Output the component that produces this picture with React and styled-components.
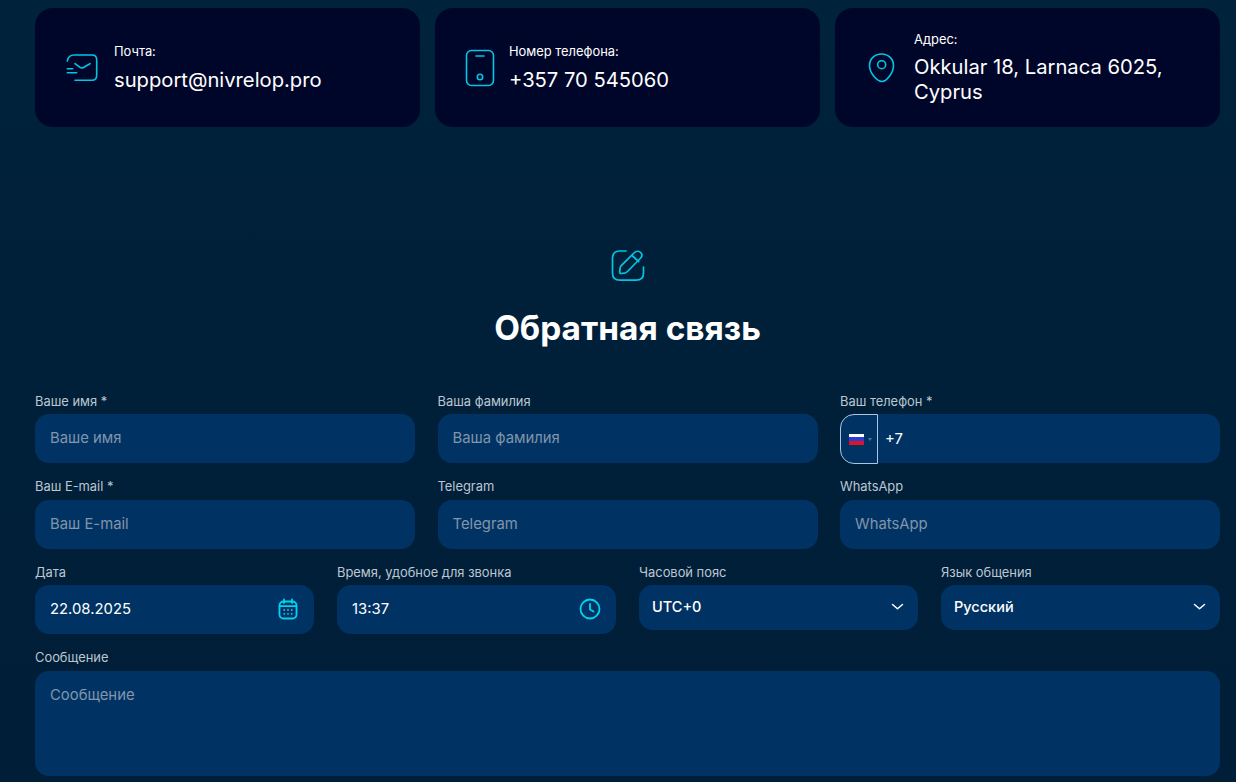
import React from "react";
import styled, { createGlobalStyle } from "styled-components";

const Global = createGlobalStyle`
  html, body { margin: 0; padding: 0; height: 100%; overflow: hidden; }
  body { background: #001f38; font-family: Inter, "Noto Sans", sans-serif; }
  * { box-sizing: border-box; }
`;

const Page = styled.div`
  width: 1236px;
  height: 782px;
  overflow: hidden;
  padding: 8px 16px 0 35px;
  background: linear-gradient(180deg, #00223b 0%, #001f39 50%, #001e38 100%);
`;

const Cards = styled.div`
  display: grid;
  grid-template-columns: repeat(3, 385px);
  gap: 15px;
`;

const Card = styled.div`
  height: 119px;
  border-radius: 18px;
  background: #00062a;
  display: flex;
  align-items: center;
  padding-left: ${p => p.$pad}px;
  gap: ${p => p.$gap}px;
`;

const CardIcon = styled.svg`
  flex: none;
  fill: none;
  stroke: #00c6e6;
  stroke-width: 1.6;
  stroke-linecap: round;
  stroke-linejoin: round;
  margin-top: 1px;
`;

const CardText = styled.div`
  display: flex;
  flex-direction: column;
  color: #fff;
  margin-top: 1px;
`;

const CardLabel = styled.div`
  font-size: 12.9px;
  line-height: 16px;
  margin-bottom: ${p => p.$gap ?? 7.5}px;
`;

const CardValue = styled.div`
  font-size: 20.2px;
  line-height: 25px;
  width: 270px;
`;

const Heading = styled.section`
  display: flex;
  flex-direction: column;
  align-items: center;
  margin-top: 121px;
  height: 145px;
`;

const HeadIcon = styled.svg`
  fill: none;
  stroke: #00c6e6;
  stroke-width: 1.7;
  stroke-linecap: round;
  stroke-linejoin: round;
`;

const Title = styled.h2`
  margin: 24px 0 0;
  color: #fff;
  font-size: 33.4px;
  line-height: 44px;
  font-weight: 700;
`;

const Row = styled.div`
  display: grid;
  grid-template-columns: ${p => p.$cols === 4 ? "repeat(4, 279px)" : "repeat(3, 380px)"};
  column-gap: ${p => p.$cols === 4 ? "23px" : "22.5px"};
  margin-bottom: 15.5px;
  align-items: start;
`;

const Field = styled.div`
  display: flex;
  flex-direction: column;
`;

const Label = styled.label`
  font-size: 12.9px;
  line-height: 16px;
  height: 21px;
  padding-top: 0.8px;
  color: #bcc6d0;
`;

const Control = styled.div`
  height: ${p => p.$h || 49}px;
  border-radius: 14px;
  background: #003363;
  display: flex;
  align-items: center;
  justify-content: space-between;
  padding: 0 ${p => p.$pr ?? 15}px 1px ${p => p.$pl ?? 15}px;
  font-size: 14.85px;
  color: #fff;
  position: relative;
`;

const Placeholder = styled.span`
  color: #8195ab;
`;

const FlagBox = styled.div`
  position: absolute;
  left: 0;
  top: 0;
  width: 38px;
  height: 50px;
  border: 1px solid #a9c6e0;
  border-radius: 14px 0 0 14px;
  display: flex;
  align-items: center;
  padding-left: 8px;
  gap: 4px;
`;

const Flag = styled.div`
  width: 15px;
  height: 11px;
  background: linear-gradient(180deg, #fff 0 30%, #2a3ce0 30% 66%, #e0141e 66% 100%);
`;

const Caret = styled.div`
  width: 0;
  height: 0;
  border-left: 2px solid transparent;
  border-right: 2px solid transparent;
  border-top: 3px solid #5f6f80;
`;

const PhoneValue = styled.span`
  margin: 2px 0 0 30px;
`;

const SelectValue = styled.span`
  font-weight: 500;
  font-size: 14.5px;
  margin-top: -1px;
`;

const FieldIcon = styled.svg`
  fill: none;
  stroke: #00d4f0;
  stroke-width: 1.8;
  stroke-linecap: round;
  stroke-linejoin: round;
  flex: none;
  margin-right: 0.5px;
`;

const Chevron = styled.svg`
  fill: none;
  stroke: #fff;
  stroke-width: 1.5;
  stroke-linecap: round;
  stroke-linejoin: round;
  flex: none;
`;

const TextArea = styled.div`
  height: 105px;
  width: 1185px;
  border-radius: 14px;
  background: #003363;
  padding: 15px;
  font-size: 14.85px;
  line-height: 18px;
`;

const TextField = ({ label, ph }) => (
  <Field>
    <Label>{label}</Label>
    <Control><Placeholder>{ph || label.replace(" *", "")}</Placeholder></Control>
  </Field>
);

const SelectField = ({ label, value }) => (
  <Field>
    <Label>{label}</Label>
    <Control $h={45} $pl={13} $pr={13}>
      <SelectValue>{value}</SelectValue>
      <Chevron width="14" height="14" viewBox="0 0 14 14"><path d="M1.5 4.5 L6.5 8.8 L11.5 4.5" /></Chevron>
    </Control>
  </Field>
);

export default function App() {
  return (
    <Page>
      <Global />
      <Cards>
        <Card $pad={31} $gap={16}>
          <CardIcon width="32" height="28" viewBox="0 0 32 28">
            <path d="M1.3 7 C2 3 4 1 8 1 H26 C29.2 1 30.7 2.8 30.7 6 V21 C30.7 24.5 29 26.3 26 26.3 H9" />
            <path d="M9 9.7 L14 13.4 C15 14.2 16.2 14.2 17.4 13.5 L24 9.7" />
            <path d="M1.3 14.7 H6.7 M1.3 18.7 H10.7" />
          </CardIcon>
          <CardText>
            <CardLabel>Почта:</CardLabel>
            <CardValue>support@nivrelop.pro</CardValue>
          </CardText>
        </Card>
        <Card $pad={30} $gap={14}>
          <CardIcon width="30" height="38" viewBox="0 0 30 38">
            <rect x="1.5" y="1.5" width="27" height="35" rx="5" />
            <path d="M11 7 H19" />
            <circle cx="15" cy="28" r="2.7" />
          </CardIcon>
          <CardText>
            <CardLabel>Номер телефона:</CardLabel>
            <CardValue>+357 70 545060</CardValue>
          </CardText>
        </Card>
        <Card $pad={33} $gap={19}>
          <CardIcon width="27" height="30" viewBox="0 0 27 30">
            <path d="M13.5 1 C20.5 1 25.5 6 25.5 12.5 C25.5 20 18.5 28.5 14 28.5 C9 28.5 1.5 20 1.5 12.5 C1.5 6 6.5 1 13.5 1 Z" />
            <circle cx="13.7" cy="11.7" r="4" />
          </CardIcon>
          <CardText>
            <CardLabel $gap={6}>Адрес:</CardLabel>
            <CardValue>Okkular 18, Larnaca 6025, Cyprus</CardValue>
          </CardText>
        </Card>
      </Cards>

      <Heading>
        <HeadIcon width="34" height="34" viewBox="0 0 34 34">
          <path d="M15 3 H9 C4 3 1.5 5.5 1.5 10.5 V25 C1.5 30 4 32.2 9 32.2 H25 C30 32.2 32.5 30 32.5 25 V19" />
          <path d="M23.5 4.5 C25 2.8 28 2.8 29.7 4.5 C31.2 6.2 31.2 8.5 29.7 10 L17 23 C16.2 23.8 15.5 24.5 14.5 24.8 L10.5 25.5 C9.3 25.7 8.6 25 8.7 23.8 L9.2 19.5 C9.3 18.5 9.8 18 10.5 17.3 Z" />
          <path d="M21 7.5 L27.7 13.5" />
        </HeadIcon>
        <Title>Обратная связь</Title>
      </Heading>

      <Row>
        <TextField label="Ваше имя *" />
        <TextField label="Ваша фамилия" />
        <Field>
          <Label>Ваш телефон *</Label>
          <Control>
            <FlagBox><Flag /><Caret /></FlagBox>
            <PhoneValue>+7</PhoneValue>
          </Control>
        </Field>
      </Row>
      <Row>
        <TextField label="Ваш E-mail *" />
        <TextField label="Telegram" />
        <TextField label="WhatsApp" />
      </Row>
      <Row $cols={4}>
        <Field>
          <Label>Дата</Label>
          <Control>
            <span>22.08.2025</span>
            <FieldIcon width="22" height="22" viewBox="0 0 22 22">
              <rect x="2.5" y="3.5" width="17" height="17" rx="4" />
              <path d="M2.5 8.2 H19.5 M7 1.5 V5 M15 1.5 V5" />
              <path d="M7.2 12 h.01 M11 12 h.01 M14.8 12 h.01 M7.2 15.8 h.01 M11 15.8 h.01 M14.8 15.8 h.01" />
            </FieldIcon>
          </Control>
        </Field>
        <Field>
          <Label>Время, удобное для звонка</Label>
          <Control>
            <span>13:37</span>
            <FieldIcon width="22" height="22" viewBox="0 0 22 22">
              <circle cx="11" cy="11" r="9.5" />
              <path d="M11 6 V11.5 L14.5 13.5" />
            </FieldIcon>
          </Control>
        </Field>
        <SelectField label="Часовой пояс" value="UTC+0" />
        <SelectField label="Язык общения" value="Русский" />
      </Row>
      <Field>
        <Label>Сообщение</Label>
        <TextArea><Placeholder>Сообщение</Placeholder></TextArea>
      </Field>
    </Page>
  );
}
